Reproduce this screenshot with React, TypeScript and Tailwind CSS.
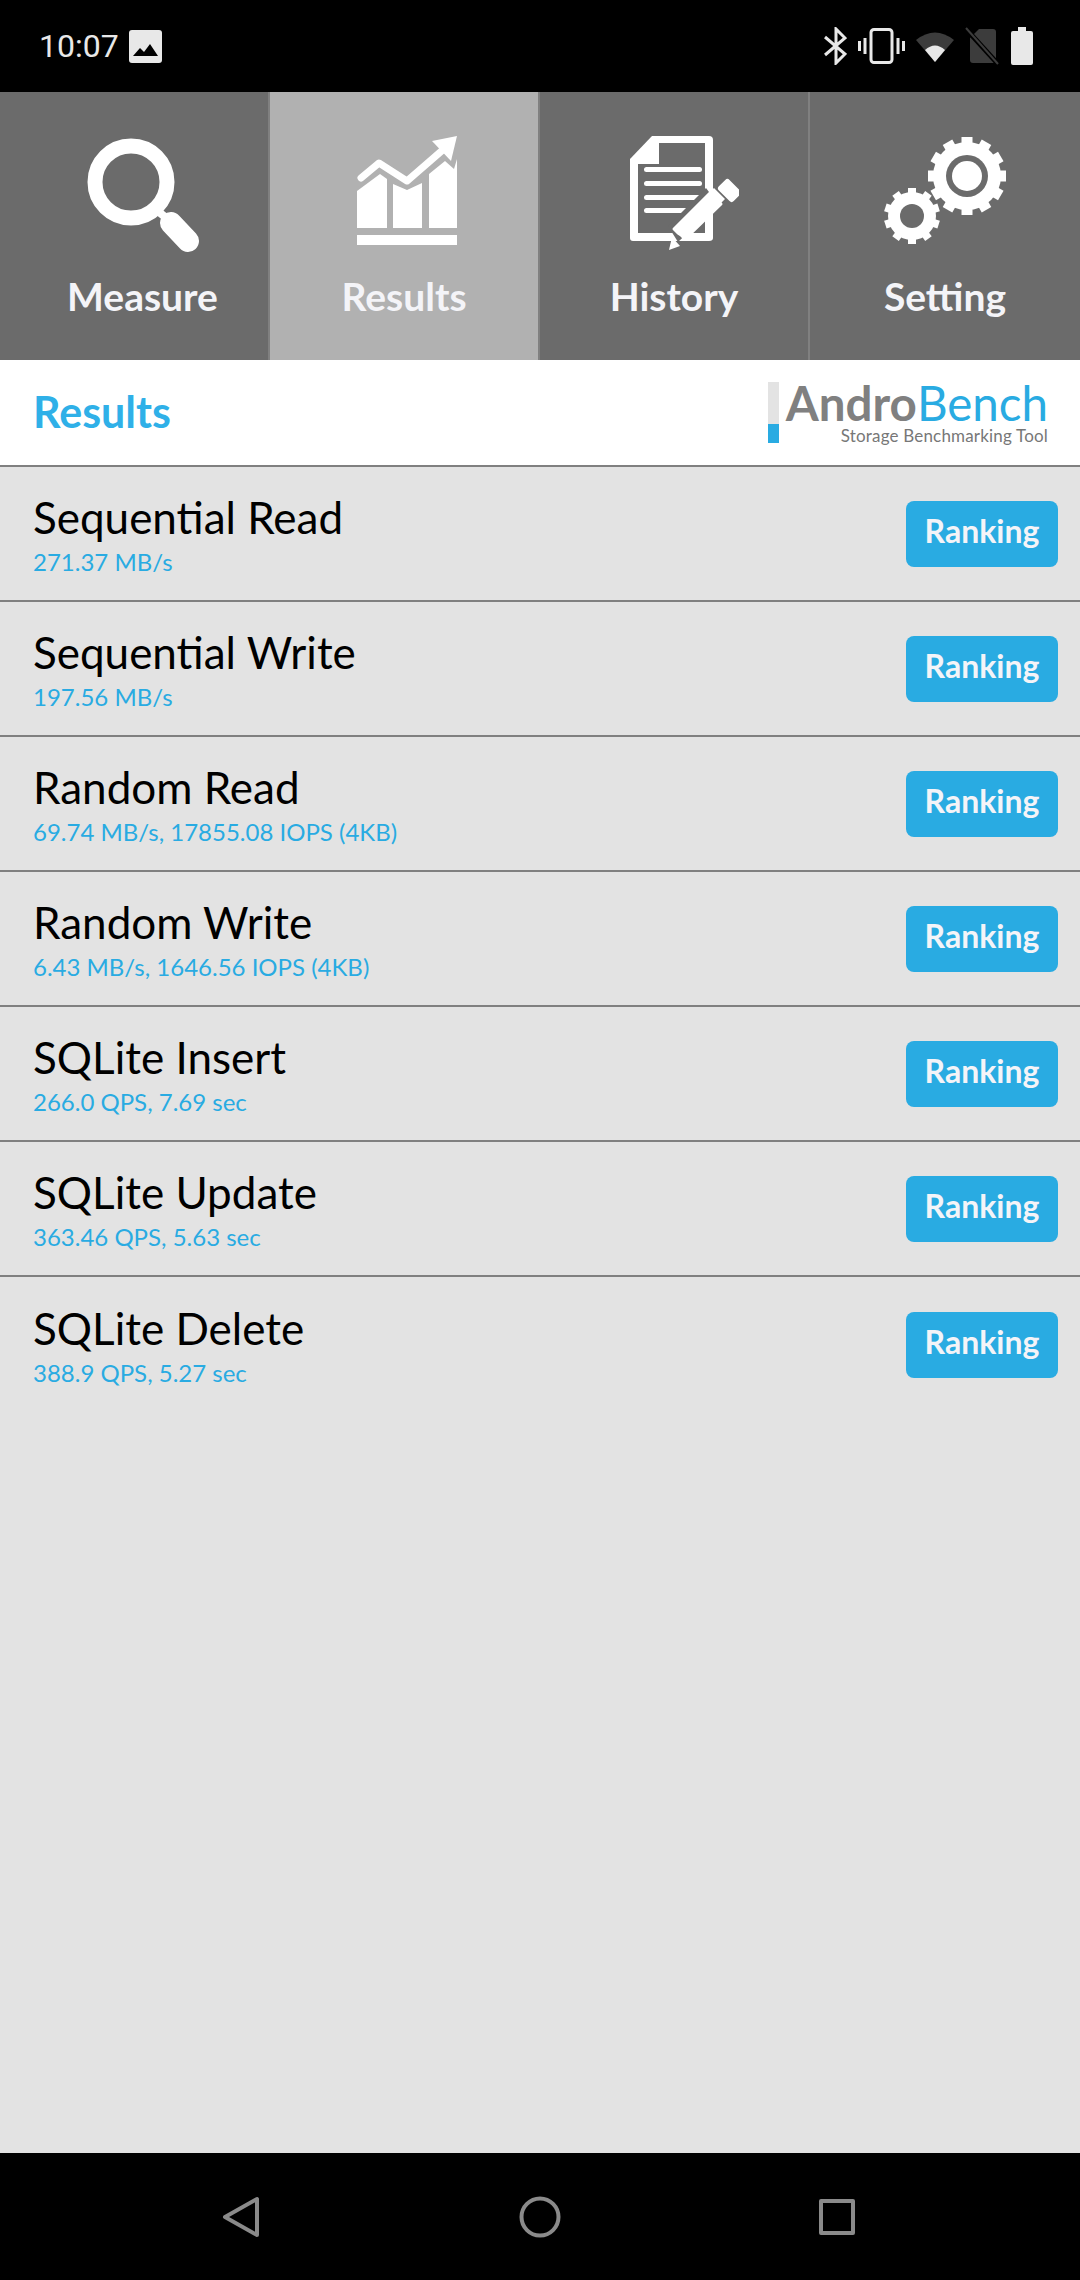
const RESULTS = [
  { name: 'Sequential Read', value: '271.37 MB/s' },
  { name: 'Sequential Write', value: '197.56 MB/s' },
  { name: 'Random Read', value: '69.74 MB/s, 17855.08 IOPS (4KB)' },
  { name: 'Random Write', value: '6.43 MB/s, 1646.56 IOPS (4KB)' },
  { name: 'SQLite Insert', value: '266.0 QPS, 7.69 sec' },
  { name: 'SQLite Update', value: '363.46 QPS, 5.63 sec' },
  { name: 'SQLite Delete', value: '388.9 QPS, 5.27 sec' },
];

const gearTeeth = (cx: number, cy: number, r: number, n: number, w: number, len: number) =>
  Array.from({ length: n }, (_, i) => (
    <rect
      key={i}
      x={cx - w / 2}
      y={cy - r - len}
      width={w}
      height={len + 2}
      transform={`rotate(${(360 / n) * i} ${cx} ${cy})`}
    />
  ));

const MeasureIcon = () => (
  <svg width="130" height="130" viewBox="-6 0 130 130" fill="none" stroke="#fff">
    <circle cx="56" cy="50" r="36" strokeWidth="15" />
    <path d="M84 80 L90 85" strokeWidth="8" />
    <path d="M96 91 L113 109" strokeWidth="22" strokeLinecap="round" />
  </svg>
);

const ResultsIcon = () => (
  <svg width="130" height="130" viewBox="-3 8 130 130" fill="#fff">
    <path d="M15 67 L38 50 L45 55 V104 H15 Z" />
    <path d="M51 60 L65 66 L80 59 V104 H51 Z" />
    <path d="M87 50 L103 37 L112 45 L115 35 V104 H87 Z" />
    <rect x="15" y="111" width="100" height="10" />
    <path d="M19 54 L37 39 L65 57 L103 24" fill="none" stroke="#fff" strokeWidth="7" strokeLinecap="round" strokeLinejoin="round" />
    <path d="M90 17 L115 12 L109 37 Z" />
  </svg>
);

const HistoryIcon = () => (
  <svg width="130" height="130" viewBox="-9 6 130 130">
    <path d="M12 33 L34 10 H91 Q95 10 95 14 V112 Q95 115 91 115 H15 Q12 115 12 112 Z" fill="#fff" />
    <path d="M20 38 H41 V17 H87 V107 H20 Z" fill="#6b6b6b" />
    <g fill="#fff">
      <rect x="26" y="41" width="58" height="5" rx="2.5" />
      <rect x="26" y="55" width="58" height="5" rx="2.5" />
      <rect x="26" y="69" width="58" height="5" rx="2.5" />
      <rect x="26" y="82" width="58" height="5" rx="2.5" />
    </g>
    <path d="M87 107 V70 L96 62 L107 73 L95 85 V107 Z" fill="#fff" />
    <path d="M50 100 L60 116 L100 78 L88 62 Z" fill="#6b6b6b" />
    <path d="M56 103 L92 67 L103 78 L67 113 L63 109 L60 107 Z" fill="#fff" stroke="#fff" strokeWidth="3" strokeLinejoin="round" />
    <path d="M54 111 L51 124 L62 120 Z" fill="#fff" />
    <rect x="101" y="57" width="21" height="15" rx="3" fill="#fff" transform="rotate(45 111.5 64.5)" />
  </svg>
);

const SettingIcon = () => (
  <svg width="130" height="130" viewBox="-1 2 130 130" fill="#fff">
    <g>
      {gearTeeth(86, 46, 33, 12, 11, 6)}
      <circle cx="86" cy="46" r="34" />
      <circle cx="86" cy="46" r="21" fill="#6b6b6b" />
      <circle cx="86" cy="46" r="15" />
    </g>
    <g>
      {gearTeeth(31, 86, 23, 10, 8, 5)}
      <circle cx="31" cy="86" r="24" />
      <circle cx="31" cy="86" r="12" fill="#6b6b6b" />
    </g>
  </svg>
);

const TABS = [
  { label: 'Measure', Icon: MeasureIcon },
  { label: 'Results', Icon: ResultsIcon },
  { label: 'History', Icon: HistoryIcon },
  { label: 'Setting', Icon: SettingIcon },
];

const StatusBar = () => (
  <div className="h-[92px] bg-black flex items-center justify-between pl-[39px] pr-[47px]">
    <div className="flex items-center gap-[10px]">
      <span className="font-['Roboto',sans-serif] text-[32px] leading-none text-[#e8e8e8]">10:07</span>
      <svg width="33" height="33" viewBox="0 0 33 33">
        <rect width="33" height="33" rx="3" fill="#e8e8e8" />
        <path d="M4 26 L11 18 L15 22 L21 14 L29 26 Z" fill="#000" />
      </svg>
    </div>
    <div className="flex items-center gap-[11px]">
      <svg width="23" height="38" viewBox="0 0 23 38" fill="none" stroke="#e8e8e8" strokeWidth="3">
        <path d="M1 10 L21 27 L12 36 V2 L21 11 L1 28" />
      </svg>
      <svg width="47" height="36" viewBox="0 0 47 36" fill="none" stroke="#e8e8e8" strokeWidth="3">
        <rect x="13" y="1.500" width="21" height="33" rx="3" />
        <path d="M7 10 V26 M1.500 13 V23 M40 10 V26 M45.500 13 V23" />
      </svg>
      <svg width="38" height="32" viewBox="0 0 38 32">
        <path d="M0 10 Q19 -5 38 10 L19 32 Z" fill="#3c3c3c" />
        <path d="M9 20 Q19 11 29 20 L19 32 Z" fill="#e8e8e8" />
      </svg>
      <svg width="34" height="38" viewBox="0 0 34 38">
        <path d="M14 2 H28 Q31 2 31 5 V33 Q31 36 28 36 H8 Q5 36 5 33 V11 Z" fill="#3c3c3c" />
        <path d="M1 2 L33 37" stroke="#000" strokeWidth="5" />
        <path d="M1 1 L33 37" stroke="#3c3c3c" strokeWidth="2" />
      </svg>
      <svg width="22" height="38" viewBox="0 0 22 38" className="ml-[1px]">
        <path d="M7 0 H15 V4 H20 Q22 4 22 6 V36 Q22 38 20 38 H2 Q0 38 0 36 V6 Q0 4 2 4 H7 Z" fill="#e8e8e8" />
      </svg>
    </div>
  </div>
);

const NavBar = () => (
  <div className="h-[127px] bg-black flex items-center justify-between pl-[222px] pr-[225px]">
    <svg width="38" height="42" viewBox="0 0 38 42" fill="none" stroke="#8a8a8a" strokeWidth="4" strokeLinejoin="round">
      <path d="M35 3 V39 L3 21 Z" />
    </svg>
    <svg width="42" height="42" viewBox="0 0 42 42" fill="none" stroke="#8a8a8a" strokeWidth="4">
      <circle cx="21" cy="21" r="18.500" />
    </svg>
    <svg width="36" height="36" viewBox="0 0 36 36" fill="none" stroke="#8a8a8a" strokeWidth="4" strokeLinejoin="round">
      <rect x="2" y="2" width="32" height="32" />
    </svg>
  </div>
);

export default function App() {
  return (
    <div className="w-[1080px] h-[2280px] flex flex-col bg-[#e3e3e3] font-['Lato',sans-serif] overflow-hidden">
      <StatusBar />

      <div className="h-[268px] grid grid-cols-4 bg-[#6b6b6b]">
        {TABS.map(({ label, Icon }, i) => (
          <div
            key={label}
            className={`flex flex-col items-center pt-[40px] ${i === 1 ? 'bg-[#b1b1b1]' : ''} ${i < 3 ? 'border-r-2 border-[#808080]' : ''}`}
          >
            <Icon />
            <span className={`mt-[10px] text-[39px] leading-[48px] font-bold text-[#f4f4f8] ${i === 0 ? 'ml-[17px]' : ''}`}>{label}</span>
          </div>
        ))}
      </div>

      <div className="h-[107px] bg-white border-b-2 border-[#808080] flex items-center justify-between pl-[33px] pr-[32px]">
        <span className="text-[43px] font-bold text-[#2fb0e8]">Results</span>
        <div className="flex items-stretch gap-[7px] pt-[2px]">
          <div className="w-[11px] h-[61px] bg-[#e3e3e3] flex flex-col justify-end">
            <div className="h-[19px] bg-[#29abe2]" />
          </div>
          <div className="flex flex-col items-end -mt-[3px]">
            <div className="text-[47.500px] leading-[47px] text-[#29abe2]">
              <span className="font-bold text-[#808080]">Andro</span>Bench
            </div>
            <span className="text-[17px] leading-[20px] tracking-[0.18px] text-[#777]">Storage Benchmarking Tool</span>
          </div>
        </div>
      </div>

      <div className="flex-1">
        {RESULTS.map((row, i) => (
          <div
            key={row.name}
            className={`h-[135px] flex items-center justify-between pl-[33px] pr-[22px] ${i < RESULTS.length - 1 ? 'border-b-2 border-[#808080]' : ''}`}
          >
            <div className="flex flex-col pt-[3px]">
              <span className="text-[44px] leading-[50px] text-black">{row.name}</span>
              <span className="mt-[3px] text-[24px] leading-[34px] text-[#29abe2]">{row.value}</span>
            </div>
            <div className="w-[152px] h-[66px] rounded-[8px] bg-[#29abe2] flex items-center justify-center pb-[5px] text-[32px] font-bold text-[#f4f4f8]">
              Ranking
            </div>
          </div>
        ))}
      </div>

      <NavBar />
    </div>
  );
}
